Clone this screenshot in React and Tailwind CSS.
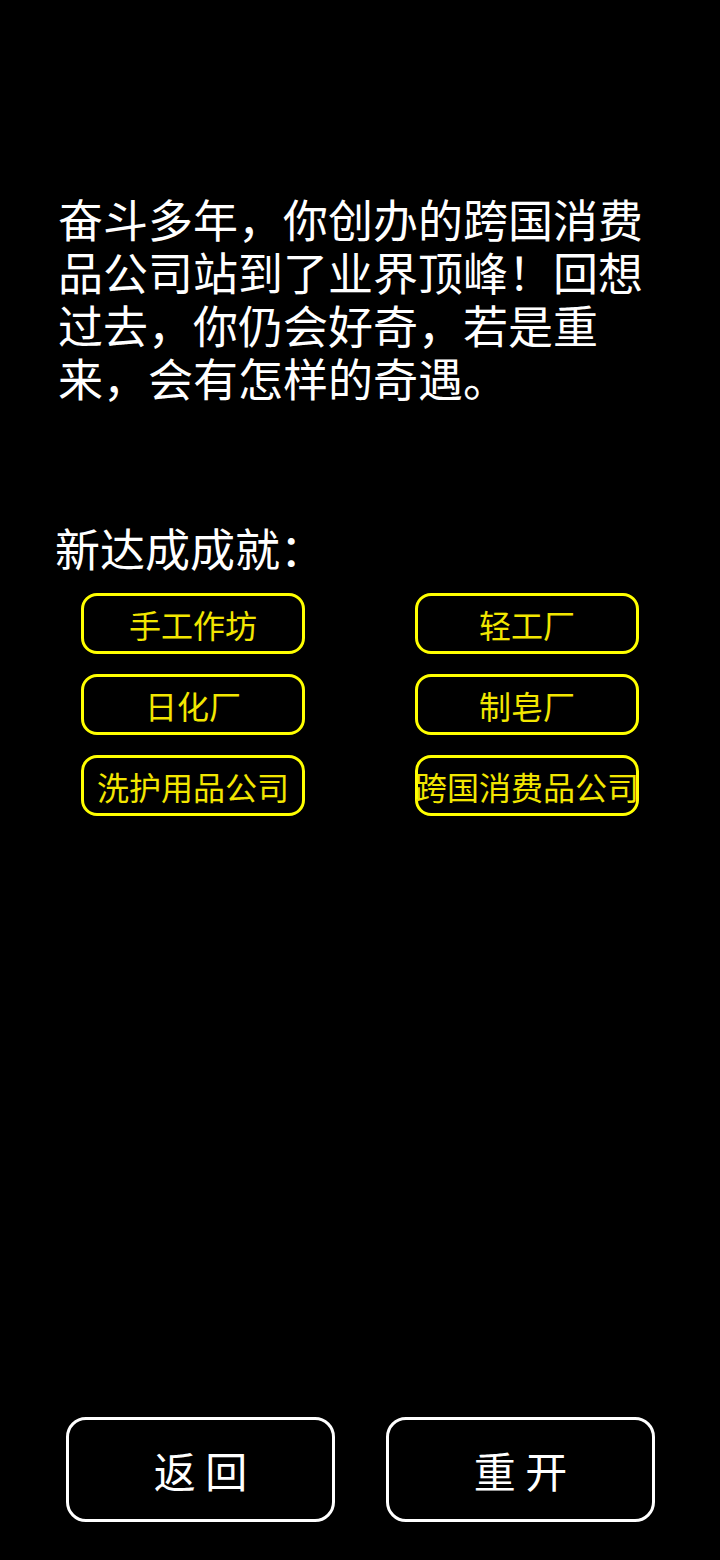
import React from 'react';

const achievements = ['手工作坊', '轻工厂', '日化厂', '制皂厂', '洗护用品公司', '跨国消费品公司'];

const font = { fontFamily: '"Noto Sans CJK SC", "Noto Sans", sans-serif' };

const App = () => {
  return (
    <div className="flex h-[1560px] w-[720px] flex-col bg-black text-white" style={font}>
      <p className="ml-[58px] mt-[192px] w-[600px] text-[45px] leading-[53px]">
        奋斗多年，你创办的跨国消费品公司站到了业界顶峰！回想过去，你仍会好奇，若是重来，会有怎样的奇遇。
      </p>

      <div className="ml-[55px] mt-[120px] text-[45px] leading-[48px]">新达成成就：</div>

      <div className="ml-[81px] mt-[21px] grid grid-cols-[224px_224px] gap-x-[110px] gap-y-[20px]">
        {achievements.map((name) => (
          <div
            key={name}
            className="flex h-[61px] items-center justify-center overflow-visible whitespace-nowrap rounded-[16px] border-[3px] border-[#ffff00] text-[32px] text-[#f2e600]"
          >
            {name}
          </div>
        ))}
      </div>

      <div className="mt-auto mb-[38px] ml-[66px] flex gap-[51px]">
        <button className="flex h-[105px] w-[269px] items-center justify-center rounded-[20px] border-[3px] border-white text-[42px] text-white">
          返 回
        </button>
        <button className="flex h-[105px] w-[269px] items-center justify-center rounded-[20px] border-[3px] border-white text-[42px] text-white">
          重 开
        </button>
      </div>
    </div>
  );
};

export default App;
